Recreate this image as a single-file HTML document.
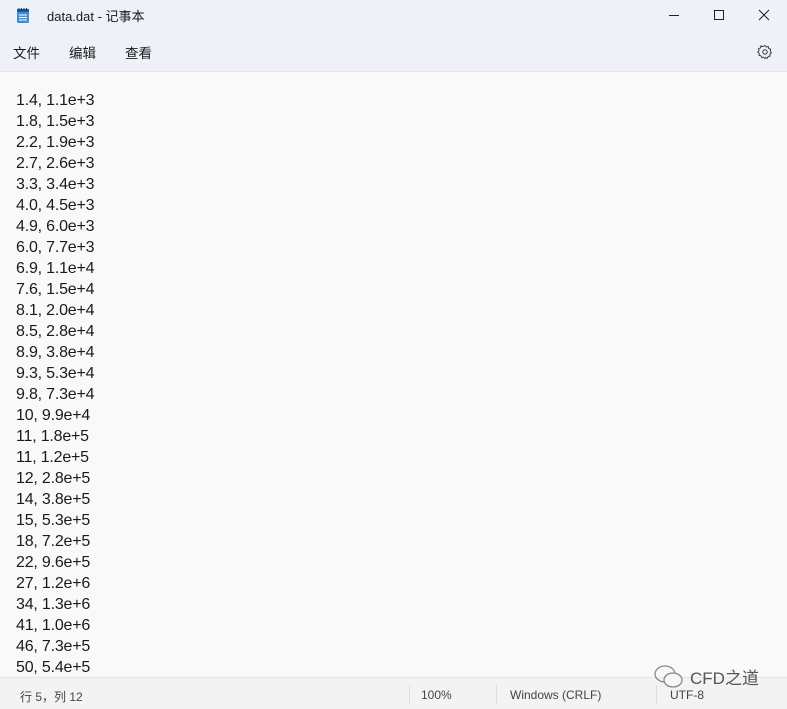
<!DOCTYPE html>
<html><head><meta charset="utf-8"><style>
body{margin:0;width:787px;height:708px;overflow:hidden;background:#f9f9f9;font-family:"Liberation Sans","Noto Sans CJK SC",sans-serif;position:relative}
.top{position:absolute;left:0;top:0;width:787px;height:71px;background:#eef2f8;border-bottom:1px solid #e3e5e9}
.title{position:absolute;left:47px;top:6px;font-size:13px;color:#1a1a1a}
.menu{position:absolute;top:42px;font-size:13.5px;color:#1a1a1a}
.txt{position:absolute;left:16px;top:90px;font-size:16px;line-height:21px;color:#1a1a1a;white-space:pre;letter-spacing:-0.2px}
.status{position:absolute;left:0;top:677px;width:787px;height:31px;background:#f3f3f3;border-top:1px solid #e5e5e5;font-size:12px;color:#444}
.status span{position:absolute;top:10px}
.sep{position:absolute;top:7px;width:1px;height:20px;background:#dcdcdc}
.wm{position:absolute;z-index:5}
</style></head><body>
<div class="top">
<svg style="position:absolute;left:16px;top:7px" width="14" height="17" viewBox="0 0 14 17"><rect x="1" y="2" width="12" height="14" rx="1.5" fill="#3a8fd8"/><rect x="1" y="2" width="12" height="3" fill="#1f5f9e"/><path d="M3 8h8M3 10.5h8M3 13h8" stroke="#fff" stroke-width="1"/><path d="M3 1v3M5.5 1v3M8 1v3M10.5 1v3" stroke="#234" stroke-width="1"/></svg>
<div class="title">data.dat - 记事本</div>
<svg style="position:absolute;left:660px;top:9px" width="120" height="14"><path d="M9 6.5h10" stroke="#222" stroke-width="1"/><rect x="54.5" y="1.5" width="9" height="9" fill="none" stroke="#222"/><path d="M99 1l10 10M109 1l-10 10" stroke="#222" stroke-width="1"/></svg>
<div class="menu" style="left:13px">文件</div>
<div class="menu" style="left:69px">编辑</div>
<div class="menu" style="left:125px">查看</div>
<svg style="position:absolute;left:757px;top:44px" width="16" height="16" viewBox="0 0 16 16"><circle cx="8" cy="8" r="2.2" fill="none" stroke="#333"/><path d="M8 1.5l1.3 1.6 2-.6.4 2 2 .7-.6 2 1.4 1.6-1.6 1.2.3 2-2 .4-.7 1.9-1.9-.7L8 14.5l-1.4-1.5-1.9.7-.7-1.9-2-.4.3-2L.7 8.2 2.1 6.6l-.6-2 2-.7.4-2 2 .6z" fill="none" stroke="#333" stroke-width=".9"/></svg>
</div>
<div class="txt">1.4, 1.1e+3
1.8, 1.5e+3
2.2, 1.9e+3
2.7, 2.6e+3
3.3, 3.4e+3
4.0, 4.5e+3
4.9, 6.0e+3
6.0, 7.7e+3
6.9, 1.1e+4
7.6, 1.5e+4
8.1, 2.0e+4
8.5, 2.8e+4
8.9, 3.8e+4
9.3, 5.3e+4
9.8, 7.3e+4
10, 9.9e+4
11, 1.8e+5
11, 1.2e+5
12, 2.8e+5
14, 3.8e+5
15, 5.3e+5
18, 7.2e+5
22, 9.6e+5
27, 1.2e+6
34, 1.3e+6
41, 1.0e+6
46, 7.3e+5
50, 5.4e+5</div>
<div class="status">
<span style="left:20px">行 5，列 12</span>
<div class="sep" style="left:409px"></div>
<span style="left:421px">100%</span>
<div class="sep" style="left:496px"></div>
<span style="left:510px">Windows (CRLF)</span>
<div class="sep" style="left:656px"></div>
<span style="left:670px">UTF-8</span>
</div>
<svg class="wm" style="left:652px;top:664px" width="34" height="26"><ellipse cx="13" cy="10" rx="10" ry="8" fill="none" stroke="#888" stroke-width="1.3"/><ellipse cx="21" cy="16" rx="9" ry="7" fill="#f6f6f6" stroke="#888" stroke-width="1.3"/></svg>
<div class="wm" style="left:690px;top:664px;font-size:17px;color:#555">CFD之道</div>
</body></html>
